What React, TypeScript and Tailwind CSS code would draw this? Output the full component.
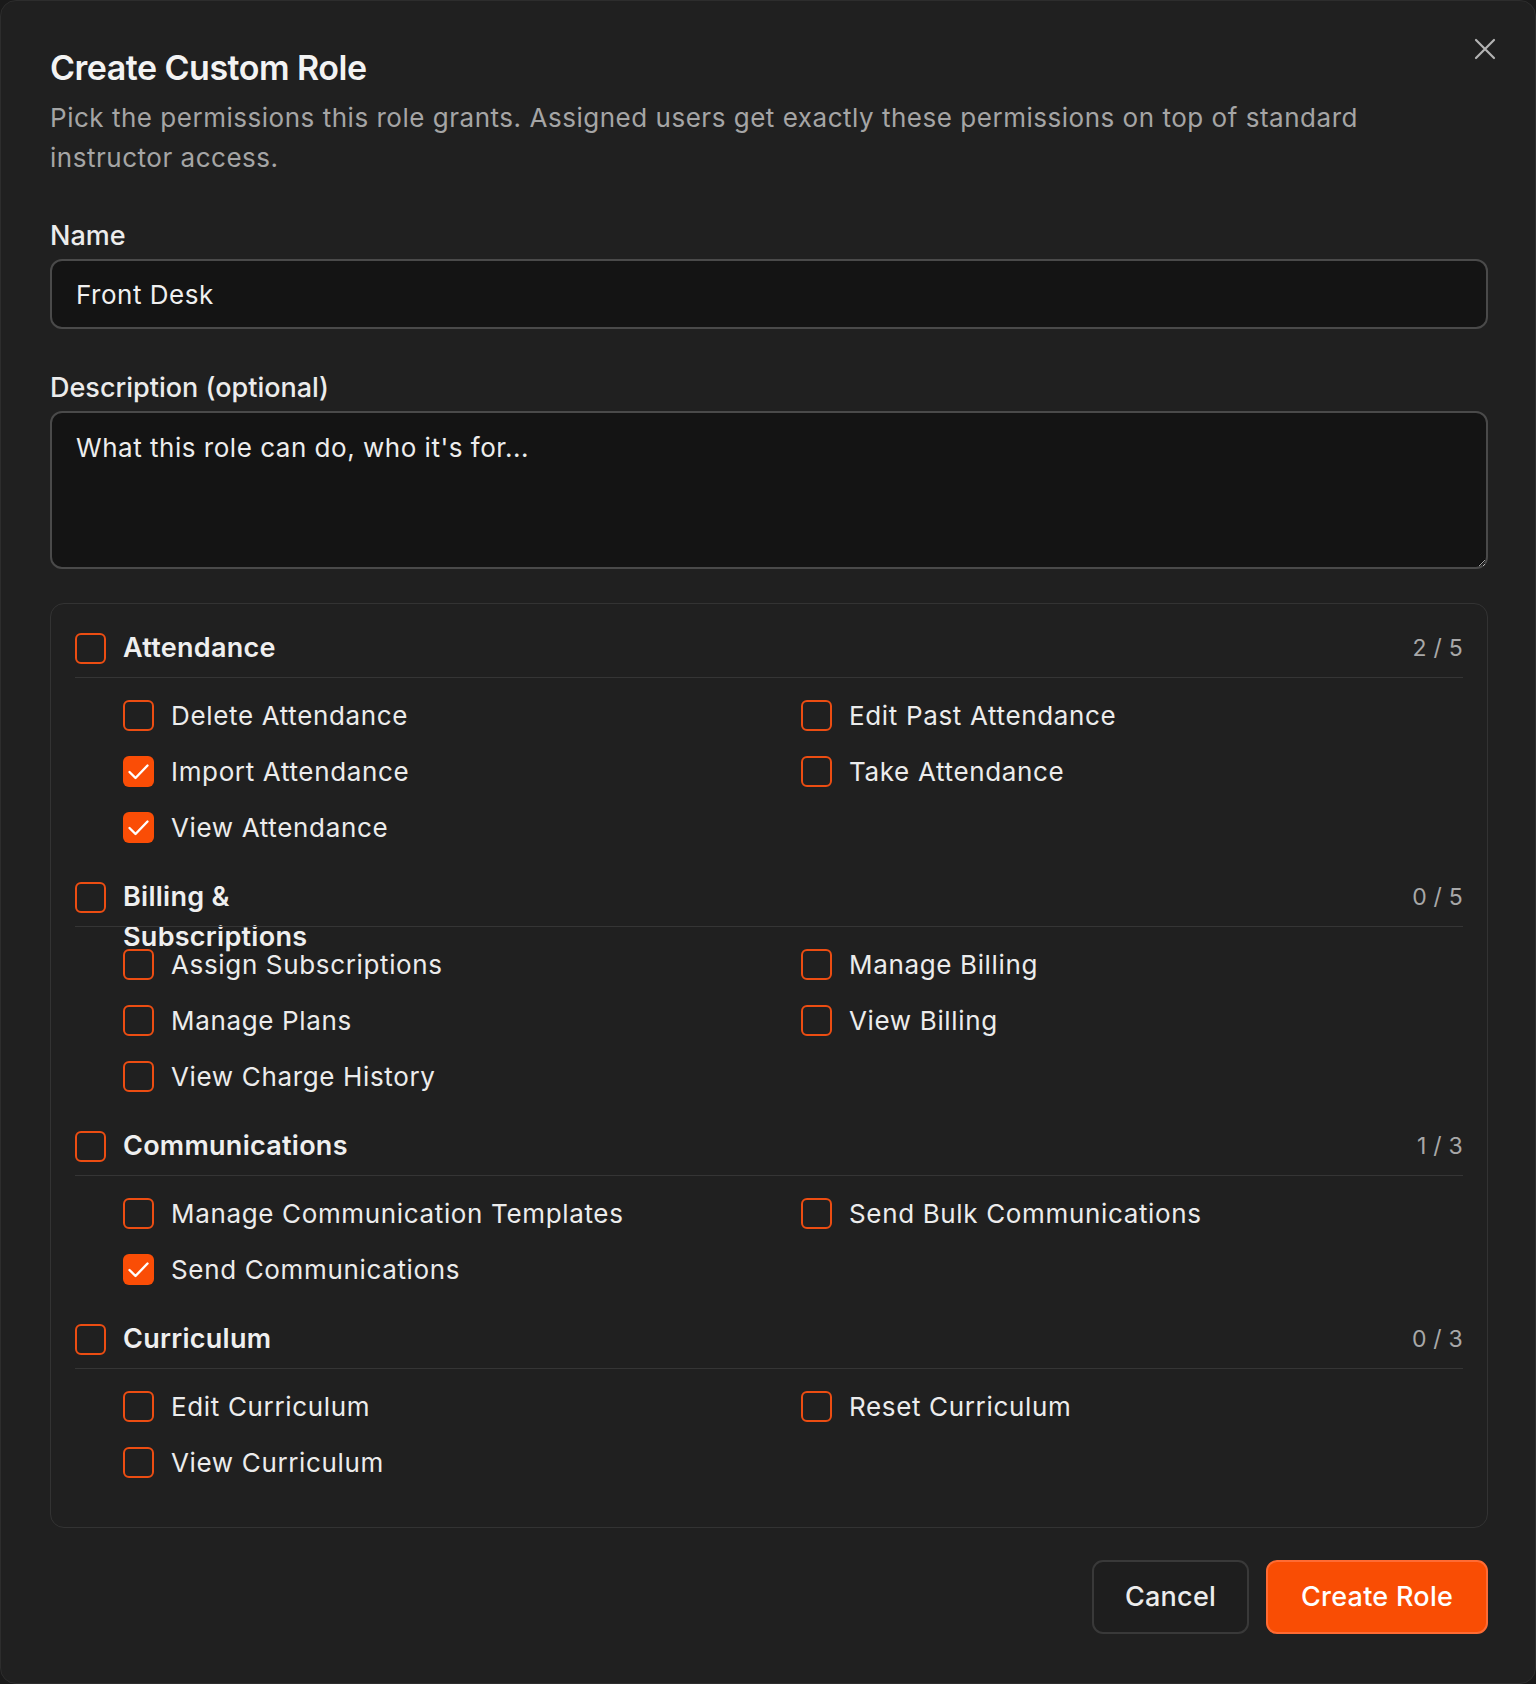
import React from "react";

type Perm = { label: string; checked?: boolean };
type Group = { title: string; count: string; items: Perm[] };

const groups: Group[] = [
  {
    title: "Attendance",
    count: "2 / 5",
    items: [
      { label: "Delete Attendance" },
      { label: "Edit Past Attendance" },
      { label: "Import Attendance", checked: true },
      { label: "Take Attendance" },
      { label: "View Attendance", checked: true },
    ],
  },
  {
    title: "Billing & Subscriptions",
    count: "0 / 5",
    items: [
      { label: "Assign Subscriptions" },
      { label: "Manage Billing" },
      { label: "Manage Plans" },
      { label: "View Billing" },
      { label: "View Charge History" },
    ],
  },
  {
    title: "Communications",
    count: "1 / 3",
    items: [
      { label: "Manage Communication Templates" },
      { label: "Send Bulk Communications" },
      { label: "Send Communications", checked: true },
    ],
  },
  {
    title: "Curriculum",
    count: "0 / 3",
    items: [
      { label: "Edit Curriculum" },
      { label: "Reset Curriculum" },
      { label: "View Curriculum" },
    ],
  },
];

function Box({ checked }: { checked?: boolean }) {
  if (checked) {
    return (
      <span className="flex h-[31px] w-[31px] shrink-0 items-center justify-center rounded-[6px] bg-[#fa4d06]">
        <svg width="31" height="31" viewBox="0 0 31 31" fill="none">
          <path d="M6.5 16 L12.5 22 L24.5 9.5" stroke="white" strokeWidth="2.4" strokeLinecap="round" strokeLinejoin="round" />
        </svg>
      </span>
    );
  }
  return <span className="block h-[31px] w-[31px] shrink-0 rounded-[6px] border-2 border-[#ec4d12]" />;
}

export default function App() {
  return (
    <div className="min-h-[1684px] w-full bg-[#1a1a1a]" style={{ fontFamily: "Inter, 'Noto Sans', sans-serif" }}>
      <div className="relative flex min-h-[1684px] flex-col rounded-[16px] border border-[#2d2d2d] bg-[#202020] pl-[49px] pr-[47px] pt-[47px] text-[#ececec]">
        <button className="absolute right-[38px] top-[36px] flex h-[24px] w-[24px] items-center justify-center text-[#b3b3b3]">
          <svg width="22" height="22" viewBox="0 0 22 22" fill="none">
            <path d="M2 2 L20 20 M20 2 L2 20" stroke="currentColor" strokeWidth="2.2" strokeLinecap="round" />
          </svg>
        </button>

        <h1 className="text-[34px] font-semibold leading-[40px] tracking-[-0.015em] text-[#f3f3f3]">Create Custom Role</h1>
        <p className="mt-[10px] text-[26px] leading-[40px] tracking-[0.02em] text-[#a5a5a5]">
          Pick the permissions this role grants. Assigned users get exactly these permissions on top of standard instructor access.
        </p>

        <label className="mt-[42px] block text-[27px] font-medium leading-[32px] text-[#ececec]">Name</label>
        <div className="mt-[7px] flex h-[70px] items-center rounded-[12px] border-2 border-[#4a4a4a] bg-[#141414] px-[24px] text-[26px] tracking-[0.02em] text-[#f0f0f0]">
          Front Desk
        </div>

        <label className="mt-[43px] block text-[27px] font-medium leading-[32px] text-[#ececec]">Description (optional)</label>
        <textarea
          className="mt-[7px] block h-[158px] w-full resize-y rounded-[12px] border-2 border-[#4a4a4a] bg-[#141414] px-[24px] py-[17px] text-[26px] leading-[36px] tracking-[0.02em] text-[#f0f0f0] outline-none placeholder:text-[#ededed]"
          placeholder="What this role can do, who it's for..."
        />

        <div className="mt-[34px] flex flex-col gap-[30px] rounded-[14px] border border-[#333333] px-[24px] pb-[45px] pt-[24px]">
          {groups.map((g) => (
            <div key={g.title} className="flex flex-col">
              <div className="flex h-[40px] items-start gap-[17px]">
                <span className="mt-[4.5px]">
                  <Box />
                </span>
                <span className="max-w-[240px] text-[27px] font-semibold leading-[40px] tracking-[0.01em] text-[#efefef]">{g.title}</span>
                <span className="ml-auto text-[23px] leading-[40px] tracking-[0.01em] text-[#a8a8a8]">{g.count}</span>
              </div>
              <div className="mt-[9px] border-t border-[#353535]" />
              <div className="grid grid-cols-2 gap-x-[16px] gap-y-[16px] pl-[48px] pt-[17px]">
                {g.items.map((it) => (
                  <div key={it.label} className="flex h-[40px] items-center gap-[17px]">
                    <Box checked={it.checked} />
                    <span className="text-[26px] tracking-[0.025em] text-[#ececec]">{it.label}</span>
                  </div>
                ))}
              </div>
            </div>
          ))}
        </div>

        <div className="mt-[32px] flex justify-end gap-[17px]">
          <button className="h-[74px] w-[157px] rounded-[11px] border-2 border-[#393939] bg-[#1e1e1e] text-[27px] font-medium tracking-[0.01em] text-[#ececec]">
            Cancel
          </button>
          <button className="h-[74px] w-[222px] rounded-[11px] border-2 border-[#ff6b33] bg-[#f94d04] text-[27px] font-medium tracking-[0.01em] text-white">
            Create Role
          </button>
        </div>
      </div>
    </div>
  );
}
